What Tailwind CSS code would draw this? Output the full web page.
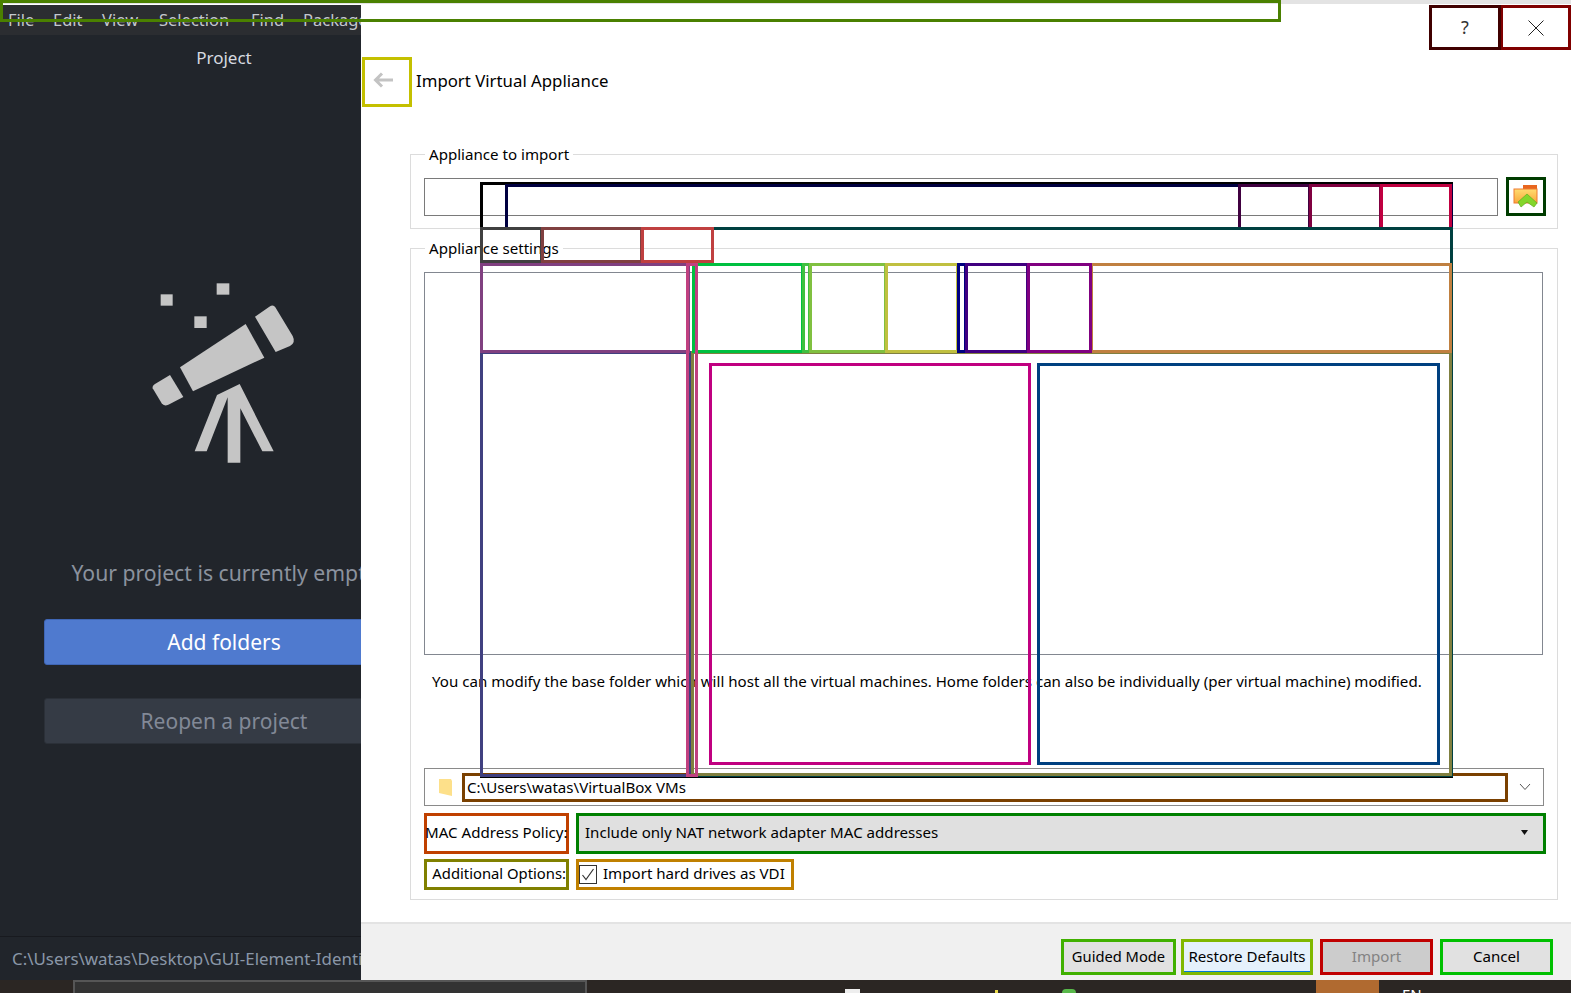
<!DOCTYPE html>
<html lang="en">
<head>
    <meta charset="UTF-8">
    <meta name="viewport" content="width=device-width, initial-scale=1.0">
    <title>Import Virtual Appliance</title>
    <script src="https://cdn.jsdelivr.net/npm/@tailwindcss/browser@4"></script>
</head>
<body class="bg-white">
<div class="relative w-[1571px] h-[993px] overflow-hidden flex flex-col font-['Noto_Sans',sans-serif] text-[15.1px] text-black bg-white">
    <div class="h-[4px] shrink-0 bg-[#e3e3e3]"></div>

    <div class="flex h-[976px] shrink-0">
        <!-- Editor side panel -->
        <div class="w-[361px] shrink-0 mt-[1px] overflow-hidden bg-[#21252b] flex flex-col">
            <div class="h-[30px] shrink-0 bg-[#2b2d31] flex items-center pl-[8px] text-[#c4c8ce] text-[16.5px] whitespace-nowrap">
                <span class="w-[45px] shrink-0">File</span>
                <span class="w-[49px] shrink-0">Edit</span>
                <span class="w-[57px] shrink-0">View</span>
                <span class="w-[92px] shrink-0">Selection</span>
                <span class="w-[52px] shrink-0">Find</span>
                <span class="shrink-0">Packages</span>
            </div>
            <div class="w-[448px] flex-1 flex flex-col items-center text-center">
                <div class="h-[46px] leading-[46px] text-[#d7dae0] text-[17px]">Project</div>
                <svg class="mt-[179px] self-start ml-[120px] shrink-0" width="200" height="220" viewBox="0 0 600 660" fill="#c5c5c5">
                    <rect x="122" y="103" width="36" height="34"/>
                    <rect x="290" y="70" width="38" height="34"/>
                    <rect x="223" y="169" width="37" height="35"/>
                    <polygon points="180,322 377,192 433,293 219,394"/>
                    <path d="M405 170 L448 140 Q460 132 466 142 L518 228 Q528 248 510 258 L467 276 Z"/>
                    <path d="M98 385 Q96 378 105 372 L150 345 L190 411 L145 434 Q132 440 125 430 Z"/>
                    <polygon points="291,405 359,372 461,574 427,574 361,445 361,608 323,608 323,412 260,574 224,574"/>
                </svg>
                <div class="mt-[78px] h-[30px] leading-[30px] text-[21.2px] text-[#8b929e] whitespace-nowrap">Your project is currently empty</div>
                <div class="mt-[31px] w-[360px] h-[46px] shrink-0 flex items-center justify-center pt-[2px] rounded-[3px] bg-[#4f7acf] border border-[#3f66b5] text-white text-[21px]">Add folders</div>
                <div class="mt-[33px] w-[360px] h-[46px] shrink-0 flex items-center justify-center pt-[2px] rounded-[3px] bg-[#353b45] border border-[#2b3038] text-[#828997] text-[21px]">Reopen a project</div>
                <div class="mt-auto w-[448px] h-[44px] border-t border-[#181a1f] flex items-center pl-[12px] pt-[1px] text-[#8a97a8] text-[16.9px] whitespace-nowrap">C:\Users\watas\Desktop\GUI-Element-Identification</div>
            </div>
        </div>

        <!-- Dialog -->
        <div class="flex-1 min-w-0 flex flex-col bg-white">
            <div class="flex justify-end mt-[1px] h-[45px] shrink-0">
                <div class="w-[72px] border-[3px] border-[#400000] flex items-center justify-center text-[18px] text-[#333]">?</div>
                <div class="w-[70px] border-[3px] border-l-2 border-[#800000] flex items-center justify-center">
                    <svg width="16" height="16" viewBox="0 0 16 16" stroke="#222" fill="none"><path d="M0.5 0.5 L15.5 15.5 M15.5 0.5 L0.5 15.5"/></svg>
                </div>
            </div>
            <div class="flex items-center mt-[7px] h-[50px] shrink-0">
                <div class="ml-[1px] w-[50px] h-[50px] border-[3px] border-[#c4c000] flex items-center justify-center pb-[4px] pr-[8px]">
                    <svg width="20" height="16" viewBox="0 0 20 16" fill="none" stroke="#c3c3c3" stroke-width="3"><path d="M9 1.5 L2.5 8 L9 14.5 M3 8 H20"/></svg>
                </div>
                <div class="ml-[4px] pb-[3px] text-[16.8px] whitespace-nowrap">Import Virtual Appliance</div>
            </div>

            <div class="relative ml-[49px] mt-[47px] w-[1148px] h-[75px] shrink-0 border border-[#dcdcdc] pt-[23px] pl-[13px] flex items-start">
                <div class="absolute left-[14px] top-[-12px] px-[4px] bg-white leading-[22px] whitespace-nowrap">Appliance to import</div>
                <div class="w-[1074px] h-[38px] border border-[#7a7a7a]"></div>
                <div class="ml-[8px] -mt-[1px] w-[40px] h-[39px] border-[3px] border-[#003c00] flex items-center justify-center">
                    <svg width="26" height="25" viewBox="0 0 26 25">
                        <defs><linearGradient id="fold" x1="0" y1="0" x2="0" y2="1"><stop offset="0" stop-color="#ffdc70"/><stop offset="1" stop-color="#f9a83c"/></linearGradient></defs>
                        <path d="M10 1 H24 V5 H10 Z" fill="#e8661f"/>
                        <rect x="1" y="5" width="23" height="14" fill="url(#fold)" stroke="#ee7a30"/>
                        <path d="M5 18 L14 10 L24 19 L21 23 L14 18 L8 23 Z" fill="#84d62b" stroke="#5fae1c" stroke-width="0.7"/>
                    </svg>
                </div>
            </div>

            <div class="relative ml-[49px] mt-[19px] w-[1148px] h-[652px] shrink-0 border border-[#dcdcdc] pt-[23px] pl-[13px] flex flex-col">
                <div class="absolute left-[14px] top-[-12px] px-[4px] bg-white leading-[22px] whitespace-nowrap">Appliance settings</div>
                <div class="w-[1119px] h-[383px] shrink-0 border border-[#828790]"></div>
                <div class="mt-[13px] ml-[8px] h-[28px] leading-[27px] shrink-0 whitespace-nowrap">You can modify the base folder which will host all the virtual machines. Home folders can also be individually (per virtual machine) modified.</div>
                <div class="mt-[72px] w-[1120px] h-[38px] shrink-0 border border-[#8a8a8a] flex items-center">
                    <svg class="ml-[13px] shrink-0" width="15" height="19" viewBox="0 0 15 19"><path d="M1 1 H13 L14 3 V18 L1 15 Z" fill="#fde08a"/></svg>
                    <div class="ml-[9px] mt-[1px] w-[1046px] h-[29px] border-[3px] border-[#7a4000] flex items-center pl-[2px] whitespace-nowrap">C:\Users\watas\VirtualBox VMs</div>
                    <svg class="ml-[11px]" width="12" height="8" viewBox="0 0 12 8" fill="none" stroke="#555"><path d="M1 1 L6 6.5 L11 1"/></svg>
                </div>
                <div class="mt-[7px] flex gap-[7px] h-[41px] shrink-0">
                    <div class="w-[145px] border-[3px] border-[#c04000] flex items-center pb-[2px] whitespace-nowrap"><span class="-ml-[2px]">MAC Address Policy:</span></div>
                    <div class="w-[970px] border-[3px] border-[#008000] bg-[#e0e0e0] flex items-center justify-between pb-[2px] pl-[6px] pr-[15px] whitespace-nowrap">
                        <span>Include only NAT network adapter MAC addresses</span>
                        <svg width="7" height="5" viewBox="0 0 7 5"><path d="M0 0 H7 L3.5 5 Z" fill="#111"/></svg>
                    </div>
                </div>
                <div class="mt-[5px] flex gap-[7px] h-[31px] shrink-0">
                    <div class="w-[145px] border-[3px] border-[#808000] flex items-center justify-end pb-[2px] text-[14.8px] whitespace-nowrap">Additional Options:</div>
                    <div class="w-[218px] border-[3px] border-[#c08000] flex items-center whitespace-nowrap">
                        <svg class="shrink-0" width="18" height="19" viewBox="0 0 18 19" fill="none"><rect x="0.5" y="0.5" width="17" height="18" stroke="#333"/><path d="M3.5 10 L7 14.5 L14.5 4" stroke="#333" stroke-width="1.2"/></svg>
                        <span class="ml-[6px] mb-[2px]">Import hard drives as VDI</span>
                    </div>
                </div>
            </div>

            <div class="mt-auto h-[58px] shrink-0 border-t-2 border-[#e3e3e3] bg-[#f0f0f0] flex items-start justify-end pt-[15px] pr-[18px]">
                <div class="w-[115px] h-[36px] border-[3px] border-[#40b000] bg-[#e1e1e1] flex items-center justify-center pb-[2px] text-[14.7px] whitespace-nowrap">Guided Mode</div>
                <div class="ml-[5px] w-[132px] h-[36px] border-[3px] border-[#80b800] bg-[#e5f1fb] shadow-[inset_0_-1px_0_#0078d7] flex items-center justify-center pb-[2px] whitespace-nowrap">Restore Defaults</div>
                <div class="ml-[7px] w-[113px] h-[36px] border-[3px] border-[#c00000] bg-[#cccccc] text-[#838383] flex items-center justify-center pb-[2px] whitespace-nowrap">Import</div>
                <div class="ml-[7px] w-[113px] h-[36px] border-[3px] border-[#00c000] bg-[#e1e1e1] flex items-center justify-center pb-[2px] whitespace-nowrap">Cancel</div>
            </div>
        </div>
    </div>

    <!-- Taskbar, mostly cut off -->
    <div class="flex-1 flex bg-[#2b2623] text-white text-[15px] leading-[20px]">
        <div class="ml-[73px] w-[514px] border-2 border-b-0 border-[#565656] bg-[#333333]"></div>
        <div class="ml-[258px] mt-[9px] w-[15px] h-[4px] bg-[#eeeeee]"></div>
        <div class="ml-[135px] mt-[10px] w-[3px] h-[3px] bg-[#e8d84a]"></div>
        <div class="ml-[64px] mt-[9px] w-[14px] h-[4px] rounded-t-full bg-[#58b84a]"></div>
        <div class="ml-[240px] w-[63px] bg-[#b06a30]"></div>
        <div class="ml-[23px] mt-[4px]">EN</div>
    </div>

    <!-- Annotation boxes lying over the dialog -->
    <div class="absolute left-0 top-0 w-[1281px] h-[22px] border-[3px] border-[#4a8000]"></div>
    <div class="absolute left-[480px] top-[182px] w-[973px] h-[596px] border-[3px] border-black"></div>
    <div class="absolute left-[505px] top-[184px] w-[948px] h-[45px] border-[3px] border-b-0 border-[#000040]"></div>
    <div class="absolute left-[1238px] top-[184px] w-[73px] h-[45px] border-[3px] border-b-0 border-[#400040]"></div>
    <div class="absolute left-[1309px] top-[184px] w-[73px] h-[45px] border-[3px] border-b-0 border-[#800040]"></div>
    <div class="absolute left-[1380px] top-[184px] w-[72px] h-[45px] border-[3px] border-b-0 border-[#c00040]"></div>
    <div class="absolute left-[480px] top-[227px] w-[973px] h-[550px] border-[3px] border-[#004040]"></div>
    <div class="absolute left-[691px] top-[351px] w-[761px] h-[425px] border-[3px] border-[#808040]"></div>
    <div class="absolute left-[480px] top-[351px] w-[211px] h-[426px] border-[3px] border-[#404080]"></div>
    <div class="absolute left-[480px] top-[227px] w-[63px] h-[36px] border-[3px] border-[#404040]"></div>
    <div class="absolute left-[541px] top-[227px] w-[102px] h-[36px] border-[3px] border-[#804040]"></div>
    <div class="absolute left-[641px] top-[227px] w-[73px] h-[36px] border-[3px] border-[#c04040]"></div>
    <div class="absolute left-[1090px] top-[263px] w-[362px] h-[90px] border-[3px] border-[#c08040]"></div>
    <div class="absolute left-[480px] top-[263px] w-[210px] h-[90px] border-[3px] border-[#804080]"></div>
    <div class="absolute left-[692px] top-[263px] w-[112px] h-[90px] border-[3px] border-[#00c040]"></div>
    <div class="absolute left-[802px] top-[263px] w-[9px] h-[90px] border-[3px] border-[#40c040]"></div>
    <div class="absolute left-[809px] top-[263px] w-[78px] h-[90px] border-[3px] border-[#80c040]"></div>
    <div class="absolute left-[885px] top-[263px] w-[74px] h-[90px] border-[3px] border-[#c0c040]"></div>
    <div class="absolute left-[957px] top-[263px] w-[10px] h-[90px] border-[3px] border-[#000080]"></div>
    <div class="absolute left-[965px] top-[263px] w-[64px] h-[90px] border-[3px] border-[#400080]"></div>
    <div class="absolute left-[1027px] top-[263px] w-[65px] h-[90px] border-[3px] border-[#800080]"></div>
    <div class="absolute left-[686px] top-[263px] w-[12px] h-[514px] border-[3px] border-[#c04080]"></div>
    <div class="absolute left-[709px] top-[363px] w-[322px] h-[402px] border-[3px] border-[#c00080]"></div>
    <div class="absolute left-[1037px] top-[363px] w-[403px] h-[402px] border-[3px] border-[#004080]"></div>
</div>
</body>
</html>
